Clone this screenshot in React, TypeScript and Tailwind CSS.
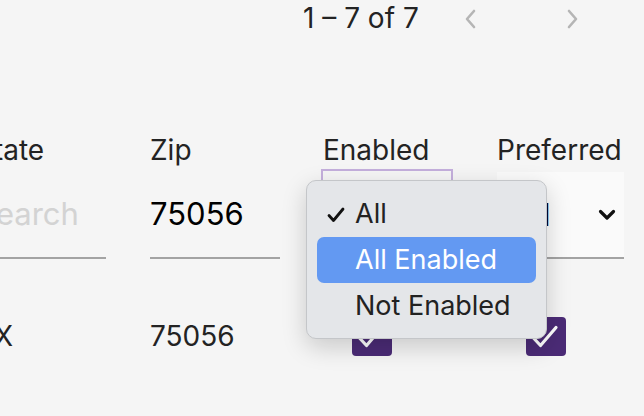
const menuItems = ["All", "All Enabled", "Not Enabled"];

function ChevronLeft() {
  return (
    <svg width="12" height="20" viewBox="0 0 12 20" fill="none">
      <path d="M10 2 L3 10 L10 18" stroke="#b5b5b5" strokeWidth="2.6" strokeLinecap="round" strokeLinejoin="round" />
    </svg>
  );
}

function ChevronRight() {
  return (
    <svg width="12" height="20" viewBox="0 0 12 20" fill="none">
      <path d="M2 2 L9 10 L2 18" stroke="#b5b5b5" strokeWidth="2.6" strokeLinecap="round" strokeLinejoin="round" />
    </svg>
  );
}

function Checkbox() {
  return (
    <div className="h-[39px] w-[40px] rounded-[4px] bg-[#4b2b76]">
      <svg width="40" height="39" viewBox="0 0 40 39" fill="none">
        <path d="M7.5 21 L14.5 28.5 L30 10.5" stroke="#fff" strokeWidth="3.2" strokeLinecap="round" strokeLinejoin="round" />
      </svg>
    </div>
  );
}

export default function App() {
  return (
    <div className="relative h-[416px] w-[644px] overflow-hidden bg-[#f5f5f5] font-['Inter',sans-serif] text-[28px] leading-[34px] text-[#232323]">
      {/* paginator */}
      <div className="mt-[1px] flex h-[34px] items-center">
        <span className="ml-[303px] whitespace-pre">1 – 7 of 7</span>
        <span className="ml-[45px] mt-[2px]">
          <ChevronLeft />
        </span>
        <span className="ml-[91px] mt-[2px]">
          <ChevronRight />
        </span>
      </div>

      <div className="-ml-[24px] mt-[98px]">
        {/* header row */}
        <div className="flex h-[34px]">
          <div className="w-[130px]">State</div>
          <div className="ml-[44px] w-[130px]">Zip</div>
          <div className="ml-[41px] w-[132px] pl-[2px]">Enabled</div>
          <div className="ml-[44px] w-[127px]">Preferred</div>
        </div>

        {/* filter row */}
        <div className="mt-[2px] flex h-[90px] text-[31px]">
          <div className="flex w-[130px] items-center border-b-2 border-[#a3a3a3] pt-[2px] text-[#d3d3d3]">
            Search
          </div>
          <div className="ml-[44px] flex w-[130px] items-center border-b-2 border-[#a3a3a3] pt-[2px] text-black">
            75056
          </div>
          <div className="ml-[41px] flex w-[132px] items-center border-2 border-[#c4afdc] pl-[14px] text-black">
            All
          </div>
          <div className="ml-[44px] mt-[3px] flex w-[127px] items-center justify-between border-b-2 border-[#a3a3a3] bg-[#fafafa] pl-[17px] pr-[8px] text-black">
            <span>All</span>
            <svg width="18" height="12" viewBox="0 0 18 12" fill="none">
              <path d="M2.5 2.5 L9 9 L15.5 2.5" stroke="#111" strokeWidth="3.2" strokeLinecap="round" strokeLinejoin="round" />
            </svg>
          </div>
        </div>

        {/* data row */}
        <div className="mt-[57px] flex h-[40px] items-center">
          <div className="w-[130px]">TX</div>
          <div className="ml-[44px] w-[130px]">75056</div>
          <div className="ml-[41px] w-[132px] pl-[31px]">
            <Checkbox />
          </div>
          <div className="ml-[44px] w-[127px] pl-[29px]">
            <Checkbox />
          </div>
        </div>
      </div>

      {/* open select menu */}
      <div className="absolute left-[306px] top-[180px] w-[241px] rounded-[10px] border border-[#c4c6c9] bg-[#e4e6e9] pb-[9px] pt-[10px] text-[27px] shadow-[0_8px_24px_rgba(0,0,0,0.18)]">
        {menuItems.map((item, i) => (
          <div
            key={item}
            className={
              i === 1
                ? "relative mx-[10px] flex h-[46px] items-center rounded-[7px] bg-[#6399f2] pl-[38px] text-white"
                : "relative mx-[10px] flex h-[46px] items-center pl-[38px] text-[#222]"
            }
          >
            {i === 0 && (
              <svg className="absolute left-[10px] top-[16px]" width="18" height="16" viewBox="0 0 18 16" fill="none">
                <path d="M2 8.5 L6.5 13.5 L16 2" stroke="#111" strokeWidth="2.8" strokeLinecap="round" strokeLinejoin="round" />
              </svg>
            )}
            {item}
          </div>
        ))}
      </div>
    </div>
  );
}
